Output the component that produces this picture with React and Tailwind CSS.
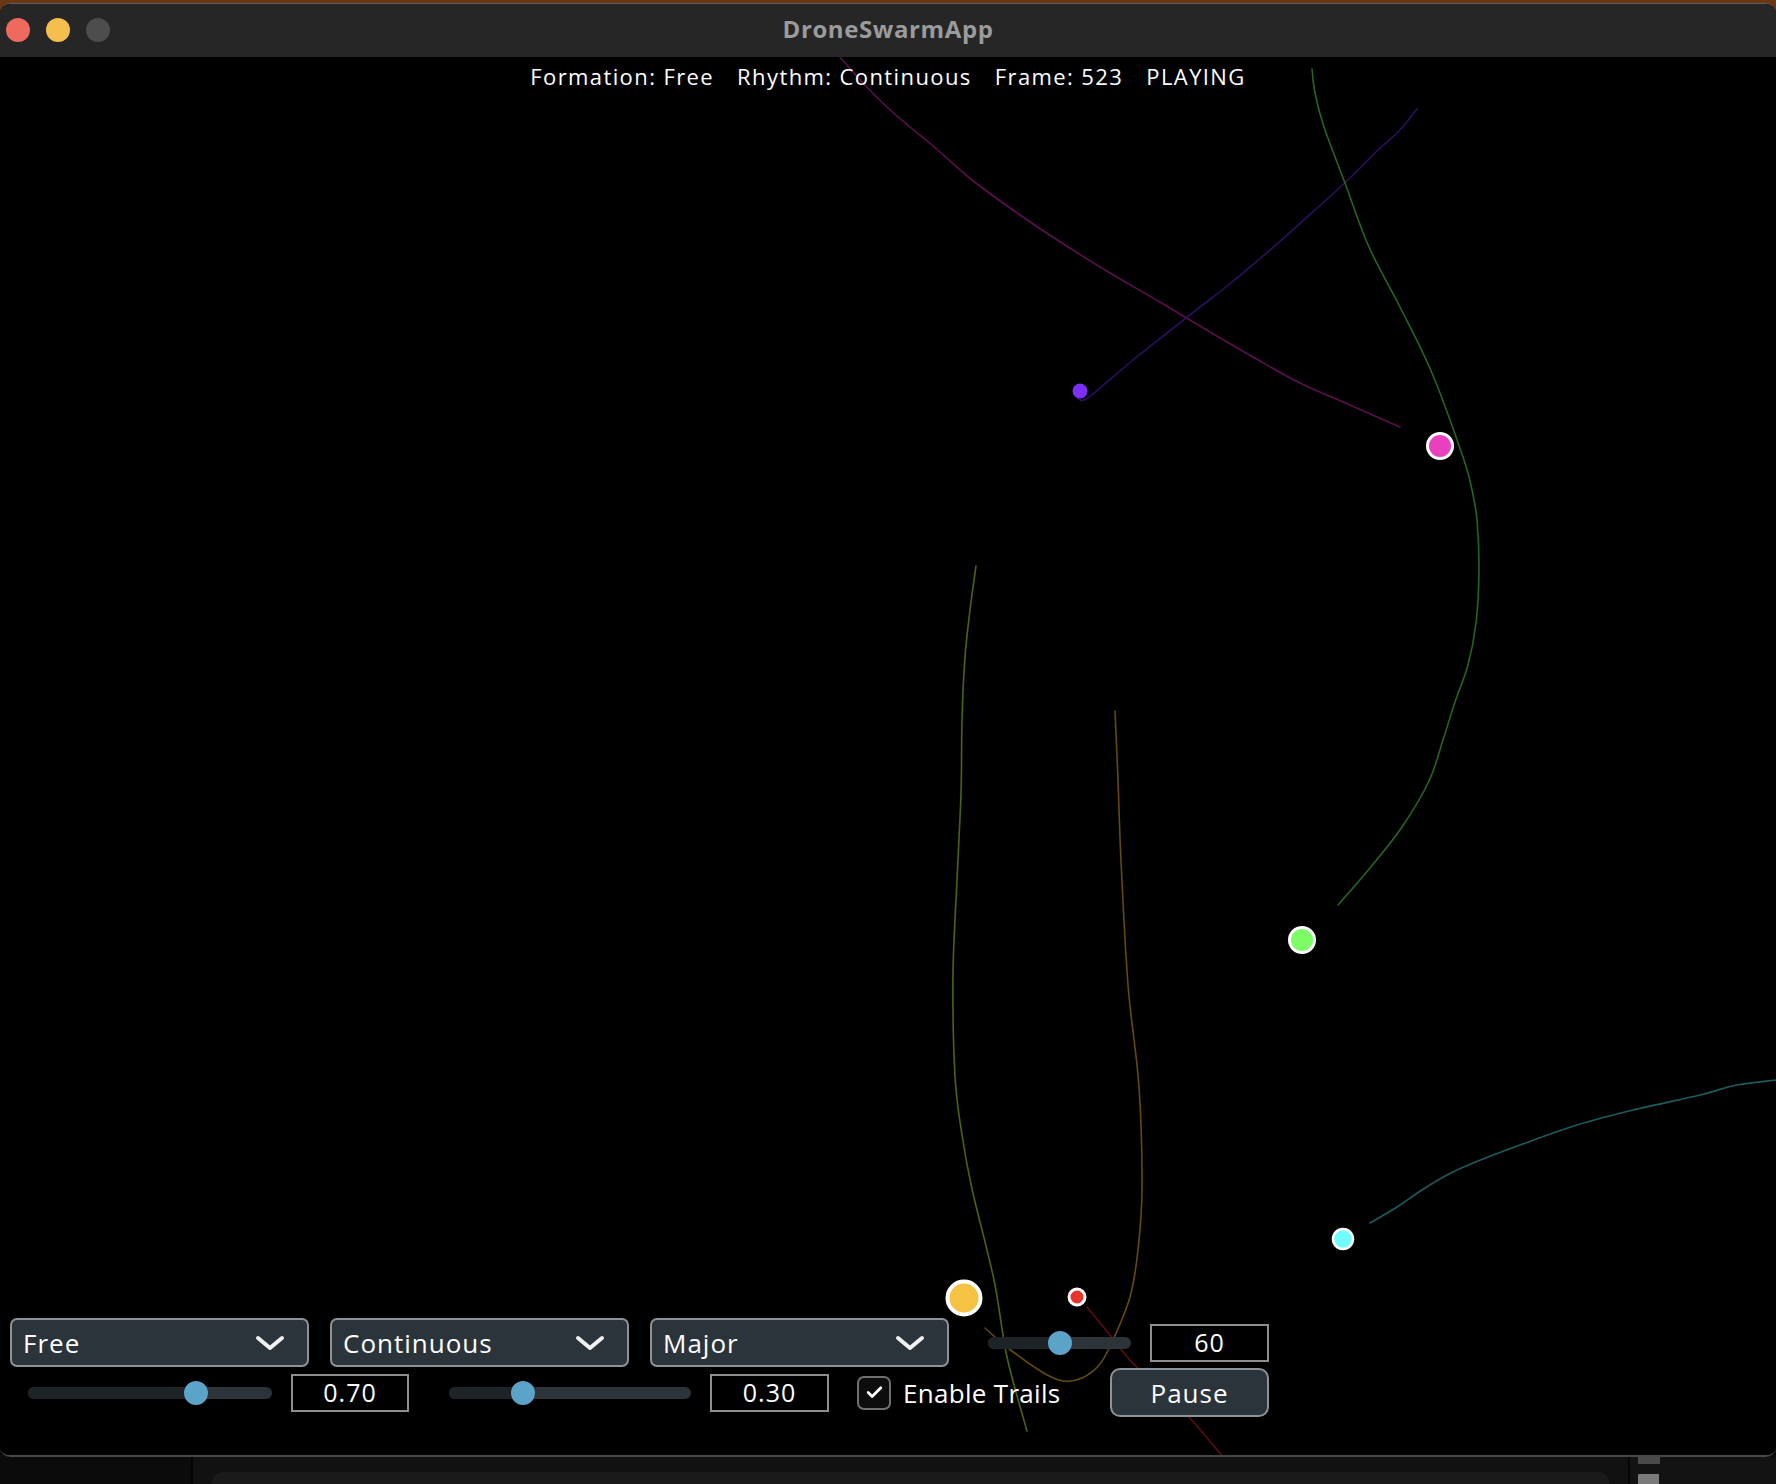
import React from 'react';
import { Check } from 'lucide-react';

const trails = [
  { color: '#5a0f4f', pts: [[840, 57], [862, 82], [887, 107], [910, 127], [932, 145], [972, 180], [1020, 215], [1065, 245], [1110, 273], [1160, 302], [1210, 332], [1253, 357], [1300, 383], [1350, 405], [1400, 427]] },
  { color: '#2c0f60', pts: [[1077, 398], [1084, 400], [1100, 388], [1133, 360], [1167, 333], [1200, 307], [1226, 287], [1270, 250], [1315, 210], [1350, 178], [1378, 150], [1400, 130], [1417, 109]] },
  { color: '#25661f', pts: [[1312, 69], [1315, 93], [1324, 127], [1345, 183], [1369, 247], [1400, 307], [1432, 373], [1463, 457], [1472, 490], [1477, 520], [1479, 570], [1476, 623], [1468, 665], [1455, 702], [1443, 740], [1429, 781], [1402, 827], [1370, 868], [1338, 905]] },
  { color: '#4b6414', pts: [[976, 566], [970, 610], [965, 657], [962, 720], [961, 793], [957, 880], [953, 974], [955, 1076], [962, 1135], [972, 1189], [994, 1280], [1007, 1357], [1027, 1431]] },
  { color: '#644a10', pts: [[1115, 711], [1118, 780], [1121, 861], [1128, 985], [1139, 1087], [1142, 1189], [1138, 1250], [1130, 1297], [1113, 1340], [1100, 1364], [1082, 1378], [1063, 1381], [1042, 1372], [1008, 1348], [985, 1328]] },
  { color: '#5e0e0e', pts: [[1087, 1307], [1110, 1335], [1130, 1360], [1160, 1390], [1189, 1417], [1223, 1457]] },
  { color: '#1c5c5c', pts: [[1370, 1223], [1397, 1207], [1422, 1190], [1447, 1175], [1473, 1163], [1520, 1145], [1577, 1125], [1633, 1110], [1700, 1095], [1737, 1085], [1776, 1080]] },
];

// Catmull-Rom -> cubic bezier, so the trails curve smoothly
function smooth(pts) {
  let d = `M${pts[0][0]},${pts[0][1]}`;
  for (let i = 0; i < pts.length - 1; i++) {
    const p0 = pts[i - 1] || pts[i];
    const p1 = pts[i];
    const p2 = pts[i + 1];
    const p3 = pts[i + 2] || p2;
    const c1 = [p1[0] + (p2[0] - p0[0]) / 6, p1[1] + (p2[1] - p0[1]) / 6];
    const c2 = [p2[0] - (p3[0] - p1[0]) / 6, p2[1] - (p3[1] - p1[1]) / 6];
    d += ` C${c1[0]},${c1[1]} ${c2[0]},${c2[1]} ${p2[0]},${p2[1]}`;
  }
  return d;
}

const drones = [
  { x: 1440, y: 446, r: 12.5, sw: 3, fill: '#e940c0' },
  { x: 1302, y: 940, r: 12.5, sw: 3, fill: '#7dfc66' },
  { x: 1343, y: 1239, r: 10, sw: 2.5, fill: '#70fcfc' },
  { x: 964, y: 1298, r: 16.5, sw: 4, fill: '#f5c244' },
  { x: 1077, y: 1297, r: 8, sw: 3, fill: '#e8342a' },
];

function Select({ label }) {
  return (
    <div className="w-[299px] h-[49px] flex items-center justify-between pl-[11px] pr-[22px] bg-[#2b343a] border-2 border-[#8d9297] rounded-[7px]">
      <span className="text-[26px] tracking-[1px] text-white leading-none">{label}</span>
      <svg width="30" height="16" viewBox="0 0 30 16">
        <polyline points="3,3 15,13 27,3" fill="none" stroke="#f2f2f2" strokeWidth="4" strokeLinecap="round" strokeLinejoin="round" />
      </svg>
    </div>
  );
}

function Slider({ width, pct }) {
  return (
    <div className="relative h-[12px] rounded-full bg-[#2c3339]" style={{ width }}>
      <div className="h-full rounded-full bg-[#1e2327]" style={{ width: `${pct}%` }} />
      <div className="absolute top-1/2 -translate-y-1/2 -translate-x-1/2 w-[24px] h-[24px] rounded-full bg-[#5ba3c9]" style={{ left: `${pct}%` }} />
    </div>
  );
}

function ValueBox({ value, className }) {
  return (
    <div className={"h-[38px] flex items-center justify-center border-2 border-[#8e8e8e] bg-black text-white text-[25px] tracking-[1px] leading-none " + className}>
      {value}
    </div>
  );
}

export default function App() {
  return (
    <div className="w-[1776px] h-[1484px] flex flex-col overflow-hidden bg-[linear-gradient(to_bottom,#6b3612_20px,#0c0c0c_20px)] font-['Open_Sans',sans-serif]">
      <div className="h-[3px] shrink-0" />

      {/* Window */}
      <div className="flex flex-col h-[1454px] shrink-0 rounded-[10px] overflow-hidden border-t border-[#5e5e5e] border-b-2 border-b-[#474747] bg-black">
        {/* Title bar */}
        <div className="h-[53px] shrink-0 grid grid-cols-[1fr_auto_1fr] items-center bg-[#262626] pb-[3px]">
          <div className="flex items-center gap-[16px] pl-[6px] pt-[1px]">
            <div className="w-[24px] h-[24px] rounded-full bg-[#ee6a5f]" />
            <div className="w-[24px] h-[24px] rounded-full bg-[#f5bf4f]" />
            <div className="w-[24px] h-[24px] rounded-full bg-[#4d4d4d]" />
          </div>
          <div className="text-[24px] font-bold tracking-[0.6px] text-[#9b9b9b] leading-none">DroneSwarmApp</div>
          <div />
        </div>

        {/* Canvas */}
        <div className="relative flex-1 flex flex-col bg-black">
          <svg className="absolute inset-0 w-full h-full" viewBox="0 57 1776 1398" preserveAspectRatio="none">
            {trails.map((t, i) => (
              <path key={i} d={smooth(t.pts)} fill="none" stroke={t.color} strokeWidth="1.6" strokeLinecap="round" />
            ))}
            <circle cx="1080" cy="391" r="7.5" fill="#7b2ff7" />
            {drones.map((c, i) => (
              <circle key={i} cx={c.x} cy={c.y} r={c.r} fill={c.fill} stroke="#ffffff" strokeWidth={c.sw} />
            ))}
          </svg>

          <div className="relative flex justify-center gap-[23px] pt-[5px] text-white text-[22px] leading-[28px] tracking-[1.4px]">
            <span>Formation: Free</span>
            <span>Rhythm: Continuous</span>
            <span>Frame: 523</span>
            <span>PLAYING</span>
          </div>

          <div className="flex-1" />

          {/* Controls */}
          <div className="relative flex flex-col pb-[38px]">
            <div className="h-[49px] flex items-center pl-[10px]">
              <div className="flex gap-[21px]">
                <Select label="Free" />
                <Select label="Continuous" />
                <Select label="Major" />
              </div>
              <div className="ml-[39px]">
                <Slider width={143} pct={50.3} />
              </div>
              <ValueBox value="60" className="ml-[19px] w-[119px]" />
            </div>

            <div className="h-[49px] mt-[1px] flex items-center pl-[28px]">
              <Slider width={244} pct={68.9} />
              <ValueBox value="0.70" className="ml-[19px] w-[118px]" />
              <div className="ml-[40px]">
                <Slider width={242} pct={30.6} />
              </div>
              <ValueBox value="0.30" className="ml-[19px] w-[119px]" />
              <div className="ml-[28px] w-[253px] flex items-center">
                <div className="w-[34px] h-[34px] flex items-center justify-center rounded-[7px] border-2 border-[#6f6f6f] bg-[#0d0d0d]">
                  <Check size={19} strokeWidth={3.5} color="#ffffff" />
                </div>
                <span className="ml-[12px] text-[26px] tracking-[0.3px] text-white leading-none">Enable Trails</span>
              </div>
              <div className="w-[159px] h-[49px] flex items-center justify-center rounded-[10px] border-2 border-[#8d9297] bg-[#2b343a] text-white text-[26px] tracking-[1px] leading-none">
                Pause
              </div>
            </div>
          </div>
        </div>
      </div>

      {/* Desktop strip below the window */}
      <div className="flex-1 flex">
        <div className="w-[193px] bg-[#0b0b0b] border-r-2 border-[#030303]" />
        <div className="flex-1 bg-[#111111] pt-[15px] px-[19px]">
          <div className="h-full rounded-t-[10px] bg-[#1a1a1a]" />
        </div>
        <div className="w-[148px] bg-[#131313] border-l-2 border-[#050505] flex flex-col pl-[8px] gap-[10px]">
          <div className="w-[22px] h-[7px] bg-[#4a4a4a]" />
          <div className="w-[21px] h-[10px] bg-[#7a7a7a] rounded-tl-[1px]" />
        </div>
      </div>
    </div>
  );
}
